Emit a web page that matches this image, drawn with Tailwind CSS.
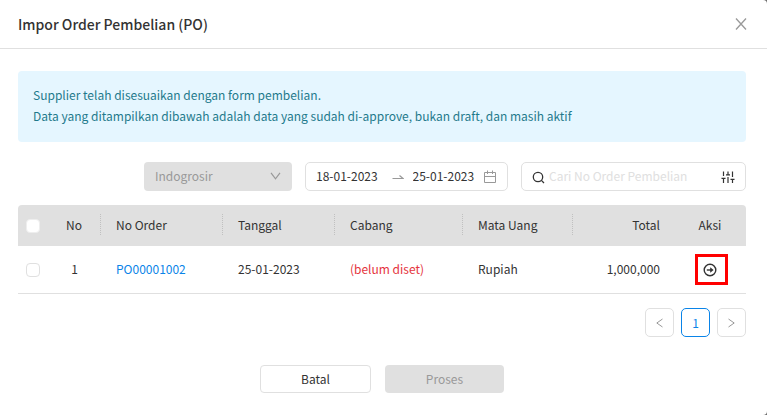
<!DOCTYPE html>
<html lang="id">
  <head>
    <meta charset="UTF-8" />
    <meta name="viewport" content="width=device-width, initial-scale=1.0" />
    <title>Impor Order Pembelian (PO)</title>
    <script src="https://cdn.jsdelivr.net/npm/@tailwindcss/browser@4"></script>
  </head>
  <body class="bg-[#6b6b6b] font-['Noto_Sans_CJK_SC',sans-serif] text-[12px] leading-[21px] text-[#333]">
    <div role="dialog" aria-labelledby="judul" class="min-h-screen rounded-r-[4px] bg-white">
      <!-- Header -->
      <header class="flex h-[49px] items-center justify-between border-b border-[#e0e0e0] pl-[18px] pr-5">
        <h1 id="judul" class="text-[14px] font-medium">Impor Order Pembelian (PO)</h1>
        <button type="button" aria-label="Tutup" class="text-[#999]">
          <svg class="size-3" viewBox="0 0 12 12" fill="none" stroke="currentColor" stroke-width="1.3">
            <path d="M1 0.5 11 11.5M11 0.5 1 11.5" />
          </svg>
        </button>
      </header>

      <main class="pt-[22px] pr-[21px] pl-[18px]">
        <!-- Info -->
        <div class="rounded-[4px] bg-[#e5f6ff] px-[15px] pt-[13px] pb-4 text-[#1f7a8c]">
          <p>Supplier telah disesuaikan dengan form pembelian.</p>
          <p>Data yang ditampilkan dibawah adalah data yang sudah di-approve, bukan draft, dan masih aktif</p>
        </div>

        <!-- Filter -->
        <div class="mt-5 flex justify-end gap-[13px]">
          <div class="grid w-[148px] items-center">
            <select
              aria-label="Supplier"
              disabled
              class="col-start-1 row-start-1 h-[29px] w-full appearance-none rounded-[4px] bg-[#e0e0e0] px-[11px] pb-[2px] text-[#999] opacity-100"
            >
              <option>Indogrosir</option>
            </select>
            <svg class="col-start-1 row-start-1 mr-[11px] mb-[2px] h-2 w-[11px] justify-self-end text-[#999]" viewBox="0 0 11 8" fill="none" stroke="currentColor" stroke-width="1.2">
              <path d="M1 0.8 5.5 6.8 10 0.8" />
            </svg>
          </div>

          <div class="flex h-[29px] w-[203px] items-center rounded-[5px] border border-[#e0e0e0] px-[10px]">
            <input type="text" aria-label="Tanggal mulai" value="18-01-2023" class="w-0 flex-1 pb-[2px] outline-none" />
            <svg class="mx-[9px] h-2 w-3 text-[#999]" viewBox="0 0 12 8" fill="none" stroke="currentColor" stroke-width="1.2">
              <path d="M0.5 5.5H11L7.5 2.5" />
            </svg>
            <input type="text" aria-label="Tanggal akhir" value="25-01-2023" class="w-0 flex-1 pb-[2px] outline-none" />
            <svg class="ml-1 size-[14px] text-[#999]" viewBox="0 0 14 14" fill="none" stroke="currentColor">
              <path d="M1.5 2.5H12.5V12.5H1.5ZM1.5 6.5H12.5M4.5 0.5V4M9.5 0.5V4" />
            </svg>
          </div>

          <div class="flex h-[29px] w-[225px] items-center rounded-[5px] border border-[#e0e0e0] px-[10px]">
            <svg class="mt-px size-[13px]" viewBox="0 0 13 13" fill="none" stroke="currentColor" stroke-width="1.3">
              <circle cx="6" cy="6" r="4.7" />
              <path d="M9.4 9.4 12 12" />
            </svg>
            <input
              type="search"
              aria-label="Cari No Order Pembelian"
              placeholder="Cari No Order Pembelian"
              class="ml-1 w-0 flex-1 pb-[2px] outline-none placeholder:text-[#e0e0e0]"
            />
            <button type="button" aria-label="Filter">
              <svg class="size-[14px]" viewBox="0 0 14 14" fill="none" stroke="currentColor" stroke-width="1.2">
                <path d="M2.5 1.5V6M2.5 8.5V13M0.5 8.3H4.5M7 1.5V4.5M7 7V13M5 4.8H9M11.5 1.5V7M11.5 9.5V13M9.5 9.3H13.5" />
              </svg>
            </button>
          </div>
        </div>

        <!-- Tabel PO -->
        <table class="mt-[14px] w-full table-fixed border-separate border-spacing-0 text-left">
          <colgroup>
            <col class="w-[30px]" />
            <col class="w-[53px]" />
            <col class="w-[122px]" />
            <col class="w-[112px]" />
            <col />
            <col class="w-[110px]" />
            <col class="w-[103px]" />
            <col class="w-[70px]" />
          </colgroup>
          <thead class="bg-[#e0e0e0]">
            <tr class="h-[41px]">
              <th class="rounded-tl-[4px] pl-2">
                <input type="checkbox" aria-label="Pilih semua" class="block size-[14px] appearance-none rounded-[4px] border border-[#eee] bg-white" />
              </th>
              <th class="pb-[3px] text-center font-normal"><div class="border-r border-dotted border-[#c0c0c0]">No</div></th>
              <th class="pb-[3px] font-normal"><div class="border-r border-dotted border-[#c0c0c0] pl-[15px]">No Order</div></th>
              <th class="pb-[3px] font-normal"><div class="border-r border-dotted border-[#c0c0c0] pl-[15px]">Tanggal</div></th>
              <th class="pb-[3px] font-normal"><div class="border-r border-dotted border-[#c0c0c0] pl-[15px]">Cabang</div></th>
              <th class="pb-[3px] font-normal"><div class="border-r border-dotted border-[#c0c0c0] pl-[15px]">Mata Uang</div></th>
              <th class="pr-4 pb-[3px] text-right font-normal">Total</th>
              <th class="rounded-tr-[4px] pr-[2px] pb-[3px] text-center font-normal">Aksi</th>
            </tr>
          </thead>
          <tbody>
            <tr class="h-12 *:border-b *:border-[#e0e0e0]">
              <td class="pl-2">
                <input type="checkbox" aria-label="Pilih PO00001002" class="block size-[14px] appearance-none rounded-[4px] border border-[#e0e0e0] bg-white" />
              </td>
              <td class="pb-[2px] text-center">1</td>
              <td class="pb-[2px] pl-[15px]"><a href="#" class="text-[#0a84e8]">PO00001002</a></td>
              <td class="pb-[2px] pl-[15px]">25-01-2023</td>
              <td class="pb-[2px] pl-[15px] text-[#e5343d]">(belum diset)</td>
              <td class="pb-[2px] pl-[15px]">Rupiah</td>
              <td class="pr-4 pb-[2px] text-right">1,000,000</td>
              <td>
                <button type="button" aria-label="Impor PO00001002" class="mx-auto flex h-[31px] w-[33px] items-center justify-center border-3 border-[#f00] pr-[2px]">
                  <svg class="size-[14px]" viewBox="0 0 14 14" fill="none" stroke="currentColor" stroke-width="1.4">
                    <circle cx="7" cy="7" r="5.8" />
                    <path d="M3.8 7H9" />
                    <path d="M7.2 4.2 10.6 7 7.2 9.8Z" fill="currentColor" stroke="none" />
                  </svg>
                </button>
              </td>
            </tr>
          </tbody>
        </table>

        <!-- Paginasi -->
        <nav aria-label="Paginasi" class="mt-[14px] flex justify-end gap-[7px]">
          <button type="button" aria-label="Sebelumnya" class="flex size-[29px] items-center justify-center rounded-[5px] border border-[#e0e0e0] text-[#999]">
            <svg class="h-[10px] w-[7px]" viewBox="0 0 7 10" fill="none" stroke="currentColor"><path d="M6.5 1 0.8 5 6.5 9" /></svg>
          </button>
          <button type="button" aria-current="page" class="flex size-[29px] items-center justify-center rounded-[5px] border border-[#0a84e8] text-[#0a84e8]">1</button>
          <button type="button" aria-label="Berikutnya" class="flex size-[29px] items-center justify-center rounded-[5px] border border-[#e0e0e0] text-[#999]">
            <svg class="h-[10px] w-[7px]" viewBox="0 0 7 10" fill="none" stroke="currentColor"><path d="M0.5 1 6.2 5 0.5 9" /></svg>
          </button>
        </nav>
      </main>

      <!-- Aksi -->
      <footer class="mt-7 flex justify-center gap-[14px] pr-[3px]">
        <button type="button" class="h-7 w-[111px] rounded-[4px] border border-[#e0e0e0] pb-[2px]">Batal</button>
        <button type="button" disabled class="h-7 w-[119px] rounded-[4px] bg-[#e0e0e0] pb-[2px] text-[#999]">Proses</button>
      </footer>
    </div>
  </body>
</html>
